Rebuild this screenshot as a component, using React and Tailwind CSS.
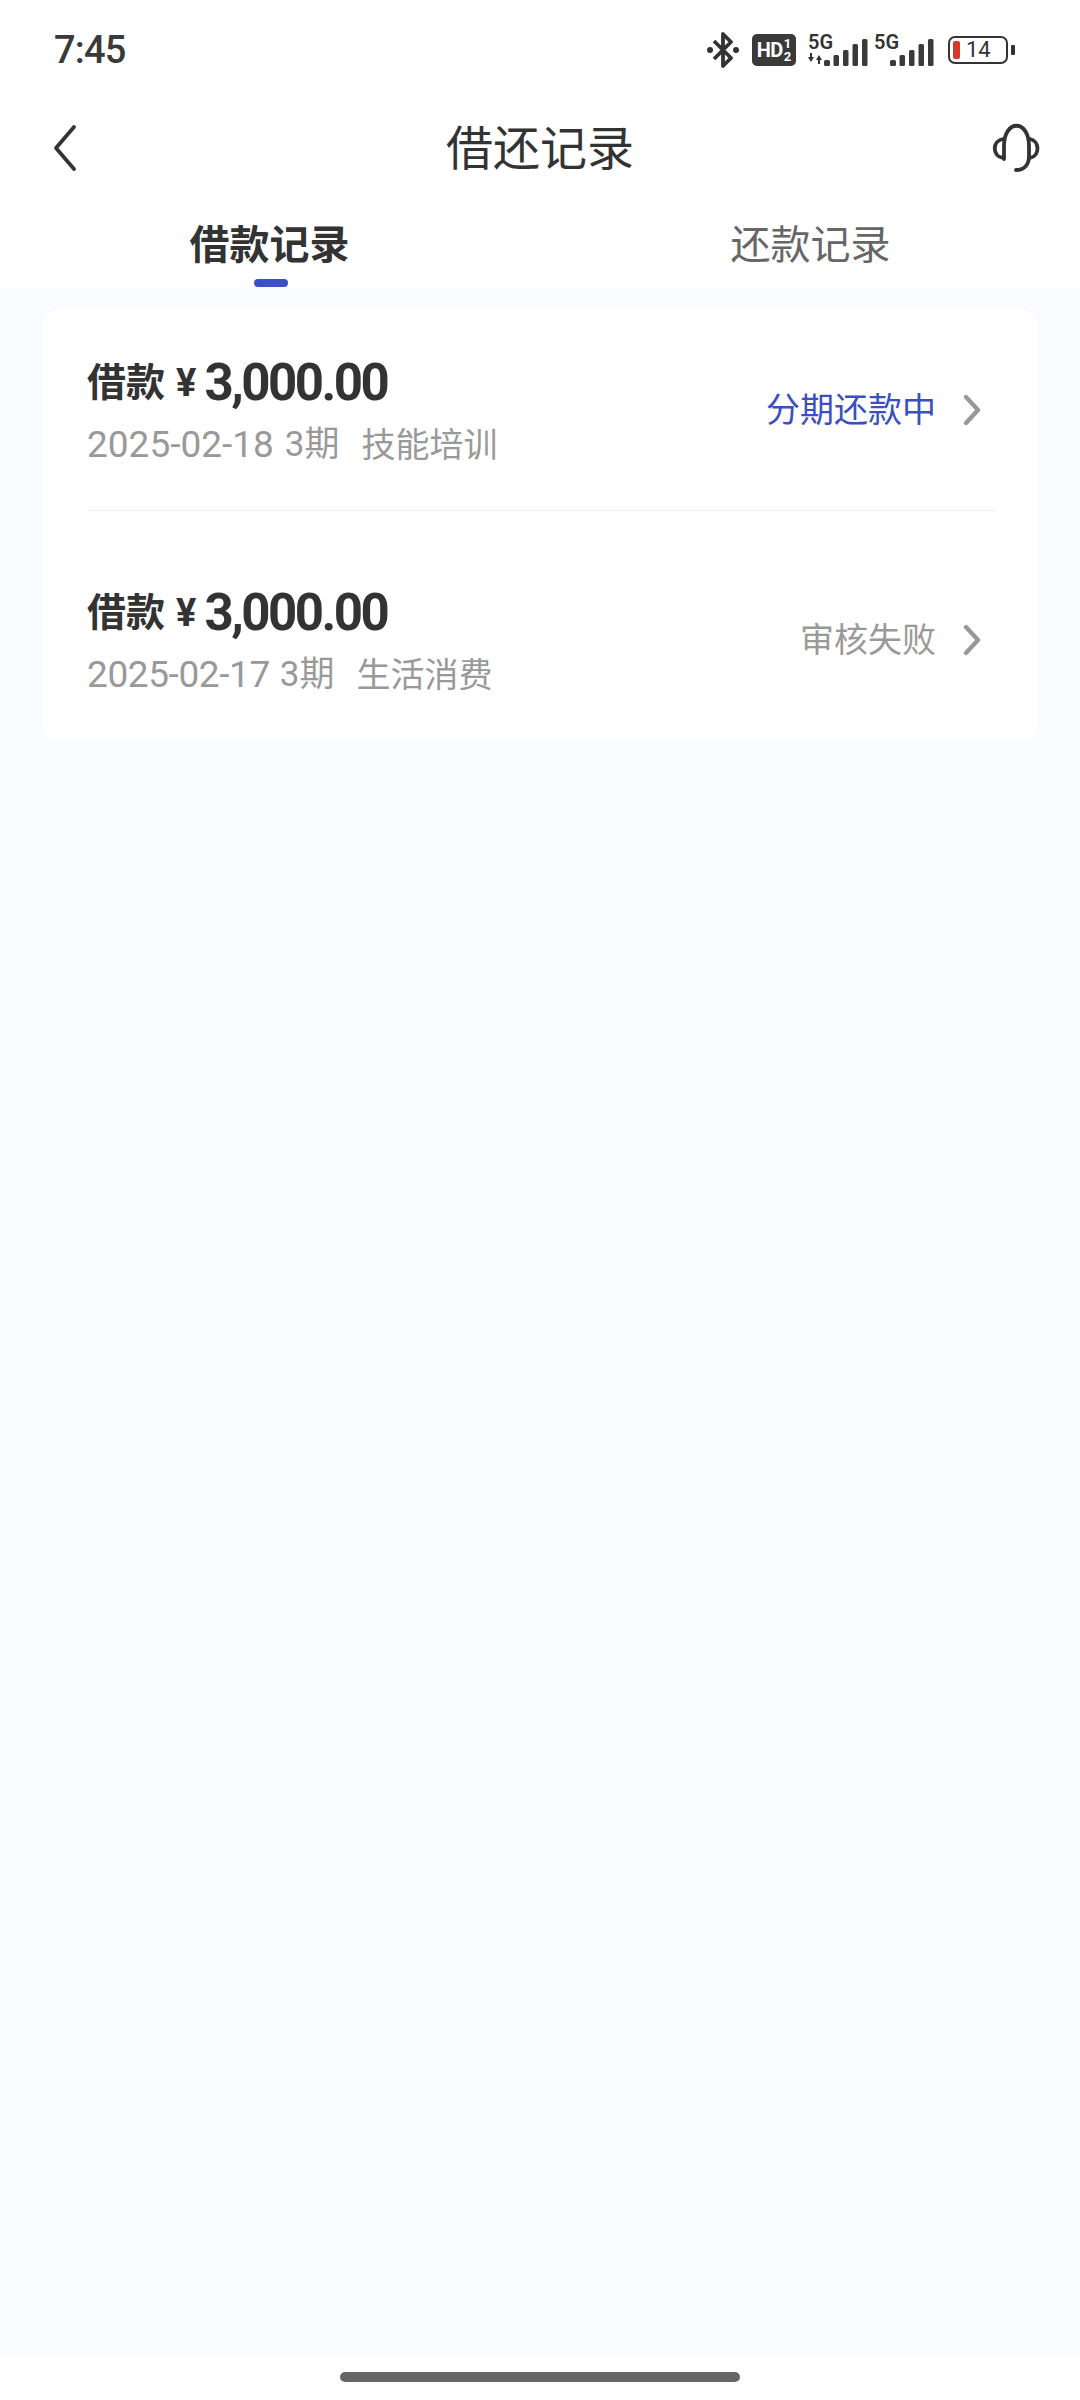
import React from "react";

const cjk = "font-['Roboto','Noto_Sans_CJK_SC',sans-serif]";

const Bluetooth = () => (
  <svg width="34" height="36" viewBox="0 0 34 36" fill="none" stroke="#333" strokeWidth="3.8">
    <path d="M8 9 L25 26 L17 34 V2 L25 10 L8 27" strokeLinejoin="round" />
    <circle cx="4" cy="18" r="3" fill="#333" stroke="none" />
    <circle cx="30" cy="18" r="3" fill="#333" stroke="none" />
  </svg>
);

const HdBadge = () => (
  <div className="flex h-[32px] w-[44px] items-center justify-center gap-[1px] rounded-[5px] bg-[#3a3a3a] text-white">
    <span className="text-[20px] leading-none font-bold tracking-[-0.5px]">HD</span>
    <div className="flex flex-col items-center text-[13px] leading-[13px] font-bold">
      <span>1</span>
      <span>2</span>
    </div>
  </div>
);

const Signal = ({ arrows }) => (
  <div className="relative flex h-[32px] w-[61px] items-end justify-end">
    <span className="absolute top-[-3px] left-[1px] text-[20px] leading-[22px] font-semibold text-[#333]">5G</span>
    {arrows && (
      <svg className="absolute bottom-[2px] left-0" width="16" height="11" viewBox="0 0 16 11" fill="#333">
        <path d="M5 0 V4 H7 L4 9 L1 4 H3 V0 Z M11 11 V7 H9 L12 2 L15 7 H13 V11 Z" />
      </svg>
    )}
    <svg width="44" height="27" viewBox="0 0 44 27" fill="#3a3a3a">
      <rect x="0" y="21" width="6" height="6" rx="1.5" />
      <rect x="9.5" y="16" width="5.5" height="11" rx="1.5" />
      <rect x="19" y="11" width="5.5" height="16" rx="1.5" />
      <rect x="28.5" y="5" width="5.5" height="22" rx="1.5" />
      <rect x="38" y="0" width="5.5" height="27" rx="1.5" />
    </svg>
  </div>
);

const Battery = () => (
  <div className="flex items-center gap-[3px]">
    <div className="flex h-[28px] w-[60px] items-center gap-[6px] rounded-[7px] border-2 border-[#333] px-[3px]">
      <div className="h-[18px] w-[7px] rounded-[2px] bg-[#d8382c]" />
      <span className="text-[22px] leading-none text-[#333]">14</span>
    </div>
    <div className="h-[10px] w-[4px] rounded-[1px] bg-[#333]" />
  </div>
);

const Headset = () => (
  <svg width="48" height="50" viewBox="0 0 48 50" fill="none" stroke="#333" strokeWidth="3.8" strokeLinecap="round">
    <path d="M12 36 V23 C12 -4 37 -4 37 23 V33 C37 42 32 47 24 47" />
    <path d="M11 16 C0 18 0 33 11 35" />
    <path d="M38 16 C48 18 48 33 38 35" />
  </svg>
);

const BackArrow = () => (
  <svg width="24" height="48" viewBox="0 0 24 48" fill="none" stroke="#333" strokeWidth="3.8" strokeLinecap="round" strokeLinejoin="round">
    <path d="M21 3 L3 24 L21 45" />
  </svg>
);

const RowArrow = () => (
  <svg width="18" height="32" viewBox="0 0 18 32" fill="none" stroke="#999" strokeWidth="4.4" strokeLinecap="round" strokeLinejoin="round">
    <path d="M3 3 L15 16 L3 29" />
  </svg>
);

const Record = ({ date, category, status, statusColor, last }) => (
  <div className={`flex items-center justify-between pr-[15px] ${last ? "mt-[29px] h-[200px]" : "h-[201px] border-b border-[#f0f0f2]"}`}>
    <div className="flex flex-col">
      <div className="flex h-[70px] items-center text-[#333]">
        <span className="text-[39px] font-bold">借款</span>
        <span className="ml-[11px] text-[38px] font-bold">¥</span>
        <span className="ml-[8px] text-[51px] font-bold tracking-[-2.5px]">3,000.00</span>
      </div>
      <div className="flex h-[54px] items-center text-[#999]">
        <span className={`text-[37px] ${last ? "tracking-[-0.4px]" : ""}`}>{date}</span>
        <span className={`text-[35px] ${last ? "ml-[10px]" : "ml-[11px]"}`}>3期</span>
        <span className="ml-[22px] text-[34px]">{category}</span>
      </div>
    </div>
    <div className="flex items-center gap-[27px]">
      <span className={`text-[34px] ${statusColor}`}>{status}</span>
      <RowArrow />
    </div>
  </div>
);

export default function App() {
  return (
    <div className={`flex h-[2400px] w-[1080px] flex-col bg-white ${cjk}`}>
      {/* 状态栏 */}
      <div className="flex h-[100px] items-center justify-between pr-[65px] pl-[54px]">
        <span className="text-[38px] font-medium tracking-[-0.8px] text-[#3a3a3a]">7:45</span>
        <div className="flex items-center">
          <Bluetooth />
          <div className="ml-[12px]">
            <HdBadge />
          </div>
          <div className="ml-[11px]">
            <Signal arrows />
          </div>
          <div className="ml-[5px]">
            <Signal />
          </div>
          <div className="ml-[14px]">
            <Battery />
          </div>
        </div>
      </div>

      {/* 标题栏 */}
      <div className="flex h-[96px] items-center pr-[40px] pl-[53px]">
        <div className="flex w-[100px] justify-start">
          <BackArrow />
        </div>
        <span className="flex-1 pr-[13px] text-center text-[47px] leading-none text-[#333]">借还记录</span>
        <div className="flex w-[100px] justify-end">
          <Headset />
        </div>
      </div>

      {/* 标签 */}
      <div className="flex h-[91px]">
        <div className="relative flex flex-1 items-center justify-center pt-[9px]">
          <span className="text-[40px] font-bold text-[#333]">借款记录</span>
          <div className="absolute bottom-0 left-[254px] h-[8px] w-[34px] rounded-full bg-[#3a4fc8]" />
        </div>
        <div className="flex flex-1 items-center justify-center pt-[9px] pl-[2px]">
          <span className="text-[40px] text-[#666]">还款记录</span>
        </div>
      </div>

      {/* 记录列表 */}
      <div className="flex-1 bg-[#fafbff] pt-[23px]">
        <div className="mx-[42px] rounded-[16px] bg-white pr-[42px] pl-[45px]">
          <Record date="2025-02-18" category="技能培训" status="分期还款中" statusColor="text-[#3a4fc0]" />
          <Record date="2025-02-17" category="生活消费" status="审核失败" statusColor="text-[#999]" last />
        </div>
      </div>

      {/* 底部横条 */}
      <div className="flex h-[42px] items-center justify-center bg-white pb-[5px]">
        <div className="h-[10px] w-[400px] rounded-full bg-[#666]" />
      </div>
    </div>
  );
}
